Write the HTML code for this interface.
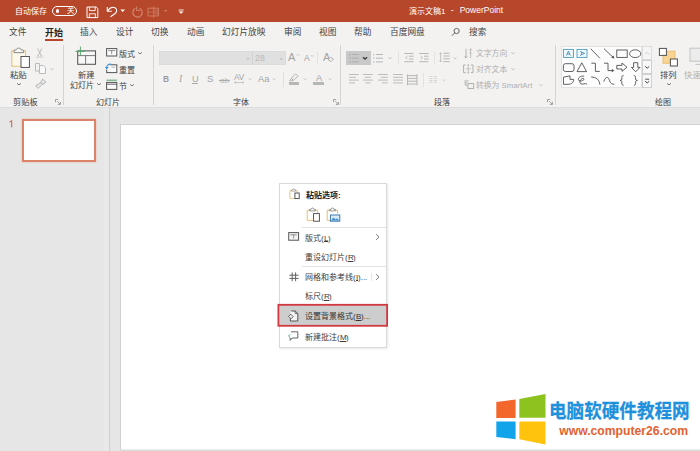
<!DOCTYPE html>
<html lang="zh-CN"><head><meta charset="utf-8"><title>PowerPoint</title><style>
html,body{margin:0;padding:0}
body{width:700px;height:451px;overflow:hidden;position:relative;background:#e6e6e6;font-family:"Liberation Sans",sans-serif}
.b{position:absolute;box-sizing:border-box}
.t{position:absolute;overflow:visible;display:block}
.l{position:absolute;white-space:nowrap;display:block}
svg text{font-family:"Liberation Sans","Noto Sans CJK SC",sans-serif}
</style></head>
<body>
<div class="b" style="left:0px;top:0px;width:700px;height:22px;background:#b7472a;"></div>
<div class="b" style="left:0px;top:22px;width:700px;height:85px;background:#f3f2f1;"></div>
<div class="b" style="left:0px;top:107px;width:700px;height:344px;background:#e6e6e6;"></div>
<div class="b" style="left:0px;top:107px;width:700px;height:1px;background:#dddddd;"></div>
<div class="b" style="left:104px;top:108px;width:5px;height:343px;background:#e9e9e9;"></div>
<svg class="t" style="left:109px;top:108px;" width="2" height="343"><rect x="0.2" y="0" width="0.7" height="343" fill="#c6c6c6"/></svg>
<svg class="t" style="left:119px;top:123px;" width="581" height="328"><rect x="1.6" y="1.5" width="590" height="325.6" fill="#fff" stroke="#cacaca" stroke-width="0.8"/></svg>
<svg class="t" aria-label="自动保存" role="img" style="left:15.00px;top:6.20px" width="33.00" height="10.40"><text x="0" y="7.60" font-size="8" fill="#fff">自动保存</text></svg>
<div class="b" style="left:52px;top:5.5px;width:25px;height:10px;border:1px solid #fff;border-radius:6px"></div>
<div class="b" style="left:55.5px;top:9px;width:3.6px;height:3.6px;border-radius:50%;background:#fff"></div>
<svg class="t" aria-label="关" role="img" style="left:66.50px;top:6.47px" width="8.50" height="9.75"><text x="0" y="7.12" font-size="7.5" fill="#fff">关</text></svg>
<svg class="t" style="left:86px;top:5.5px;" width="13" height="13"><path d="M1 1H10.2L11.8 2.6V11.6H1Z" fill="none" stroke="#fff" stroke-width="1"/><path d="M3.6 1V4.6H9.2V1M3.4 11.6V7.8H9.4V11.6" fill="none" stroke="#fff" stroke-width="0.9"/></svg>
<svg class="t" style="left:106px;top:5.5px;" width="13" height="13"><path d="M1.3 0.9V5.3H5.8" fill="none" stroke="#fff" stroke-width="1.1"/><path d="M1.6 5C3.5 2 6.5 0.5 9 1.8C11.5 3.3 11 6.5 8.5 8L4.5 10.7" fill="none" stroke="#fff" stroke-width="1.1"/></svg>
<svg class="t" style="left:119.5px;top:8px;" width="6" height="6"><path d="M0.4 1.6L2.7 4L5 1.6Z" fill="#fff"/></svg>
<svg class="t" style="left:131px;top:5.5px;" width="13" height="13"><path d="M4.2 2.3A4.7 4.7 0 1 0 8.6 2.2" fill="none" stroke="#d38a74" stroke-width="1.1"/><path d="M5.6 0.4V4.4H9" fill="none" stroke="#d38a74" stroke-width="0.9"/></svg>
<svg class="t" style="left:147px;top:5.5px;" width="13" height="13"><path d="M1 2.2H11.4V10H1Z" fill="none" stroke="#cf846e" stroke-width="0.9"/><path d="M6.6 0.2V12.4M1 6.1H11.4M6.6 4.2H11.4M6.6 8H11.4" fill="none" stroke="#cf846e" stroke-width="0.7"/></svg>
<svg class="t" style="left:163px;top:8px;" width="6" height="6"><path d="M0.9 1.9L2.7 3.7L4.5 1.9Z" fill="#cf846e"/></svg>
<svg class="t" style="left:178px;top:8.5px;" width="7" height="6"><path d="M0.6 1H5.6" stroke="#fff" stroke-width="0.9"/><path d="M0.6 2.6L3.1 4.8L5.6 2.6Z" fill="#fff"/></svg>
<svg class="t" style="left:451px;top:26.5px;" width="10" height="10"><circle cx="5.6" cy="4" r="2.6" fill="none" stroke="#555" stroke-width="0.9"/><path d="M3.8 5.8L0.8 8.8" stroke="#555" stroke-width="0.9"/></svg>
<svg class="t" aria-label="演示文稿1" role="img" style="left:408.50px;top:5.90px" width="37.56" height="10.40"><text x="0" y="7.60" font-size="8" fill="#fff">演示文稿1</text></svg>
<span class="l" style="left:450.8px;top:5.155px;font-size:9px;line-height:10.35px;color:#fff;font-weight:normal;">-</span>
<span class="l" style="left:459.7px;top:5.7075px;font-size:8.5px;line-height:9.775px;color:#fff;font-weight:normal;">PowerPoint</span>
<svg class="t" aria-label="文件" role="img" style="left:9.00px;top:26.84px" width="18.40" height="11.31"><text x="0" y="8.26" font-size="8.7" fill="#444">文件</text></svg>
<svg class="t" aria-label="插入" role="img" style="left:80.00px;top:26.84px" width="18.40" height="11.31"><text x="0" y="8.26" font-size="8.7" fill="#444">插入</text></svg>
<svg class="t" aria-label="设计" role="img" style="left:116.00px;top:26.84px" width="18.40" height="11.31"><text x="0" y="8.26" font-size="8.7" fill="#444">设计</text></svg>
<svg class="t" aria-label="切换" role="img" style="left:151.00px;top:26.84px" width="18.40" height="11.31"><text x="0" y="8.26" font-size="8.7" fill="#444">切换</text></svg>
<svg class="t" aria-label="动画" role="img" style="left:186.50px;top:26.84px" width="18.40" height="11.31"><text x="0" y="8.26" font-size="8.7" fill="#444">动画</text></svg>
<svg class="t" aria-label="幻灯片放映" role="img" style="left:222.00px;top:26.84px" width="44.50" height="11.31"><text x="0" y="8.26" font-size="8.7" fill="#444">幻灯片放映</text></svg>
<svg class="t" aria-label="审阅" role="img" style="left:283.50px;top:26.84px" width="18.40" height="11.31"><text x="0" y="8.26" font-size="8.7" fill="#444">审阅</text></svg>
<svg class="t" aria-label="视图" role="img" style="left:318.50px;top:26.84px" width="18.40" height="11.31"><text x="0" y="8.26" font-size="8.7" fill="#444">视图</text></svg>
<svg class="t" aria-label="帮助" role="img" style="left:354.00px;top:26.84px" width="18.40" height="11.31"><text x="0" y="8.26" font-size="8.7" fill="#444">帮助</text></svg>
<svg class="t" aria-label="百度网盘" role="img" style="left:389.60px;top:26.84px" width="35.80" height="11.31"><text x="0" y="8.26" font-size="8.7" fill="#444">百度网盘</text></svg>
<svg class="t" aria-label="搜索" role="img" style="left:469.00px;top:26.84px" width="18.40" height="11.31"><text x="0" y="8.26" font-size="8.7" fill="#444">搜索</text></svg>
<svg class="t" aria-label="开始" role="img" style="left:45.00px;top:26.65px" width="19.00" height="11.70"><text x="0" y="8.55" font-size="9" font-weight="bold" fill="#222">开始</text></svg>
<div class="b" style="left:45px;top:39px;width:18px;height:2px;background:#b7472a;"></div>
<div class="b" style="left:63.4px;top:44.5px;width:1px;height:60px;background:#d4d4d4;"></div>
<div class="b" style="left:152.8px;top:44.5px;width:1px;height:60px;background:#d4d4d4;"></div>
<div class="b" style="left:340.3px;top:44.5px;width:1px;height:60px;background:#d4d4d4;"></div>
<div class="b" style="left:554.8px;top:44.5px;width:1px;height:60px;background:#d4d4d4;"></div>
<svg class="t" style="left:10px;top:46px;" width="22" height="24"><path d="M4.6 4.9H1.9V20.2H10.6M13 4.9H15.4V10" fill="none" stroke="#ecc478" stroke-width="1.3"/><path d="M2.6 5.6V19.5H10.6V10H14.7V5.6Z" fill="#fdf8ec"/><path d="M4 6.6V4.9C4 4.3 4.4 4 5 4H6.2C6.2 1.5 11.2 1.5 11.2 4H12.6C13.2 4 13.6 4.3 13.6 4.9V6.6Z" fill="#fafafa" stroke="#7a7a7a" stroke-width="0.9"/><rect x="11" y="10.5" width="8.4" height="10.9" fill="#fff" stroke="#4f4f4f" stroke-width="0.95"/></svg>
<svg class="t" aria-label="粘贴" role="img" style="left:10.00px;top:69.62px" width="17.80" height="10.92"><text x="0" y="7.98" font-size="8.4" fill="#404040">粘贴</text></svg>
<svg class="t" style="left:16.4px;top:81.3px;" width="6" height="6"><polyline points="1.1,2.4 3,3.9 4.9,2.4" fill="none" stroke="#666" stroke-width="0.9"/></svg>
<svg class="t" style="left:36px;top:47.6px;" width="9" height="11"><path d="M1.6 0.4L5.2 7.6M5.8 0.4L2.2 7.6" stroke="#b6b6b6" stroke-width="0.9" fill="none"/><circle cx="1.9" cy="8.6" r="1.1" fill="none" stroke="#bcbcbc" stroke-width="0.7"/><circle cx="5.5" cy="8.6" r="1.1" fill="none" stroke="#bcbcbc" stroke-width="0.7"/></svg>
<svg class="t" style="left:35px;top:62.5px;" width="12" height="11"><path d="M0.5 0.5H4.5V8H0.5Z" fill="#f3f3f3" stroke="#b4b4b4" stroke-width="0.9"/><path d="M4.5 2.5H8.5L10.5 4.5V10.5H4.5Z" fill="#f8f8f8" stroke="#b4b4b4" stroke-width="0.9"/></svg>
<svg class="t" style="left:49px;top:65.7px;" width="6" height="6"><polyline points="1.4,2.45 3,3.85 4.6,2.45" fill="none" stroke="#bcbcbc" stroke-width="0.85"/></svg>
<svg class="t" style="left:35px;top:78px;" width="12" height="11"><path d="M7.8 1L11 4.2L7.6 6.4L5.6 4.4ZM5.8 4.6L7.4 6.2L3.2 10.4L0.6 7.8Z" fill="#e6e6e6" stroke="#b0b0b0" stroke-width="0.9" stroke-linejoin="round"/></svg>
<svg class="t" aria-label="剪贴板" role="img" style="left:13.20px;top:96.51px" width="25.60" height="10.66"><text x="0" y="7.79" font-size="8.2" fill="#404040">剪贴板</text></svg>
<svg class="t" style="left:55.3px;top:98.8px;" width="6" height="6"><path d="M0.5 3.2V0.5H3.2M2.2 2.2L5.2 5.2M5.4 2.8V5.4H2.8" fill="none" stroke="#8a8a8a" stroke-width="0.8"/></svg>
<svg class="t" style="left:74px;top:46px;" width="24" height="20"><rect x="3.7" y="4.9" width="17.8" height="13.4" fill="#f7f7f7" stroke="#5c5c5c" stroke-width="1.1"/><path d="M3.9 9.6H21.5M11.6 9.6V18.3" stroke="#6b6b6b" stroke-width="0.9" fill="none"/><path d="M6.4 0.6V9.6M1.6 5.4H11" stroke="#4fa868" stroke-width="0.95" fill="none"/></svg>
<svg class="t" aria-label="新建" role="img" style="left:78.20px;top:69.81px" width="17.40" height="10.66"><text x="0" y="7.79" font-size="8.2" fill="#404040">新建</text></svg>
<svg class="t" aria-label="幻灯片" role="img" style="left:70.40px;top:80.20px" width="25.00" height="10.40"><text x="0" y="7.60" font-size="8" fill="#404040">幻灯片</text></svg>
<svg class="t" style="left:96.1px;top:81.3px;" width="6" height="6"><polyline points="1.1,2.4 3,3.9 4.9,2.4" fill="none" stroke="#666" stroke-width="0.9"/></svg>
<svg class="t" style="left:106px;top:48.1px;" width="12" height="9"><rect x="0.6" y="0.6" width="10.2" height="7.4" fill="#fafafa" stroke="#555" stroke-width="1"/><path d="M2.3 2.6H9.1M5.7 2.6V6.2" stroke="#777" stroke-width="0.8" fill="none"/></svg>
<svg class="t" aria-label="版式" role="img" style="left:119.30px;top:48.80px" width="17.00" height="10.40"><text x="0" y="7.60" font-size="8" fill="#404040">版式</text></svg>
<svg class="t" style="left:137px;top:50.2px;" width="6" height="6"><polyline points="1.1,2.4 3,3.9 4.9,2.4" fill="none" stroke="#666" stroke-width="0.9"/></svg>
<svg class="t" style="left:105px;top:62.5px;" width="13" height="11"><rect x="1.7" y="1.8" width="10.1" height="7.8" fill="#fafafa" stroke="#555" stroke-width="1"/><path d="M6.4 4.2H10" stroke="#999" stroke-width="0.7"/><path d="M0 0H5.6V2.6H4.4V6.4H0Z" fill="#f3f2f1"/><path d="M6.2 1.3C3.6 0.7 1.6 2.4 1.7 5" fill="none" stroke="#3a8fd0" stroke-width="1.1"/><path d="M-0.1 3.9L1.7 6.6L3.6 4.1Z" fill="#3a8fd0"/></svg>
<svg class="t" aria-label="重置" role="img" style="left:119.30px;top:64.70px" width="17.00" height="10.40"><text x="0" y="7.60" font-size="8" fill="#404040">重置</text></svg>
<svg class="t" style="left:106px;top:79px;" width="12" height="12"><path d="M0.6 1.2H10.8" stroke="#5aa76b" stroke-width="1.1"/><rect x="0.6" y="3.4" width="10.2" height="7" fill="#fafafa" stroke="#555" stroke-width="1"/><path d="M0.6 5.2H10.8" stroke="#555" stroke-width="0.9"/></svg>
<svg class="t" aria-label="节" role="img" style="left:119.40px;top:80.50px" width="9.00" height="10.40"><text x="0" y="7.60" font-size="8" fill="#404040">节</text></svg>
<svg class="t" style="left:129.2px;top:82px;" width="6" height="6"><polyline points="1.1,2.4 3,3.9 4.9,2.4" fill="none" stroke="#666" stroke-width="0.9"/></svg>
<svg class="t" aria-label="幻灯片" role="img" style="left:95.50px;top:96.70px" width="25.00" height="10.40"><text x="0" y="7.60" font-size="8" fill="#404040">幻灯片</text></svg>
<div class="b" style="left:158.5px;top:50.7px;width:127px;height:14.3px;background:#e0e0e0;border:1px solid #dbdbdb;"></div>
<div class="b" style="left:251.6px;top:51.5px;width:1px;height:12.8px;background:#d2d2d2;"></div>
<svg class="t" style="left:245.1px;top:56px;" width="6" height="6"><path d="M1.3 2.2L3 4L4.7 2.2Z" fill="#bdbdbd"/></svg>
<svg class="t" aria-label="28" role="img" style="left:254.60px;top:53.34px" width="10.77" height="11.44"><text x="0" y="8.36" font-size="8.8" fill="#bababa">28</text></svg>
<svg class="t" style="left:277.7px;top:56px;" width="6" height="6"><path d="M1.3 2.2L3 4L4.7 2.2Z" fill="#bdbdbd"/></svg>
<svg class="t" aria-label="A" role="img" style="left:288.30px;top:50.95px" width="7.69" height="14.30"><text x="0" y="10.45" font-size="11" fill="#a2a2a2">A</text></svg>
<svg class="t" style="left:295.6px;top:52.6px;" width="5" height="4"><polyline points="0.8,2.5 2.1,1.1 3.4,2.5" fill="none" stroke="#b8b8b8" stroke-width="0.7"/></svg>
<svg class="t" aria-label="A" role="img" style="left:304.20px;top:53.33px" width="6.17" height="11.05"><text x="0" y="8.07" font-size="8.5" fill="#a2a2a2">A</text></svg>
<svg class="t" style="left:309.6px;top:53.6px;" width="5" height="4"><polyline points="0.8,1.1 2.1,2.5 3.4,1.1" fill="none" stroke="#b8b8b8" stroke-width="0.7"/></svg>
<div class="b" style="left:317px;top:52px;width:1px;height:11.5px;background:#e2e2e2;"></div>
<svg class="t" aria-label="A" role="img" style="left:322.70px;top:50.95px" width="7.69" height="14.30"><text x="0" y="10.45" font-size="11" fill="#a2a2a2">A</text></svg>
<svg class="t" style="left:327px;top:56.4px;" width="8" height="7"><path d="M3.6 1.2L6.4 3L4 5.6L1.2 3.8Z" fill="#f3f2f1" stroke="#a4a4a4" stroke-width="0.8"/></svg>
<svg class="t" aria-label="B" role="img" style="left:163.10px;top:72.67px" width="6.69" height="12.35"><text x="0" y="9.03" font-size="9.5" font-weight="bold" fill="#9c9c9c" transform="translate(0,0) scale(0.88,1)">B</text></svg>
<span class="l" style="left:179px;top:72.931px;font-size:9.8px;line-height:11.27px;color:#a4a4a4;font-weight:normal;font-style:italic;font-family:'Liberation Serif',serif;">I</span>
<svg class="t" aria-label="U" role="img" style="left:192.30px;top:72.66px" width="7.63" height="11.96"><text x="0" y="8.74" font-size="9.2" fill="#a4a4a4">U</text></svg>
<div class="b" style="left:192.4px;top:82.8px;width:5.6px;height:0.8px;background:#ababab;"></div>
<svg class="t" aria-label="S" role="img" style="left:207.00px;top:72.67px" width="6.78" height="12.35"><text x="0" y="9.03" font-size="9.5" fill="#a4a4a4">S</text></svg>
<svg class="t" aria-label="ab" role="img" style="left:220.00px;top:74.60px" width="10.45" height="10.40"><text x="0" y="7.60" font-size="8" fill="#b8b8b8">ab</text></svg>
<div class="b" style="left:219.2px;top:79.6px;width:10.8px;height:0.8px;background:#ababab;"></div>
<svg class="t" aria-label="AV" role="img" style="left:234.20px;top:72.11px" width="9.70" height="10.66"><text x="0" y="7.79" font-size="8.2" fill="#a4a4a4">AV</text></svg>
<svg class="t" style="left:234px;top:81.2px;" width="11" height="3"><path d="M0.5 1.5H9.8M1.8 0.4L0.5 1.5L1.8 2.6M8.5 0.4L9.8 1.5L8.5 2.6" fill="none" stroke="#b0b0b0" stroke-width="0.6"/></svg>
<svg class="t" style="left:246.6px;top:76.3px;" width="6" height="6"><polyline points="1.5,2.5 3,3.8 4.5,2.5" fill="none" stroke="#c2c2c2" stroke-width="0.8"/></svg>
<svg class="t" aria-label="Aa" role="img" style="left:258.20px;top:73.37px" width="11.89" height="12.09"><text x="0" y="8.84" font-size="9.3" fill="#a4a4a4">Aa</text></svg>
<svg class="t" style="left:271.4px;top:76.3px;" width="6" height="6"><polyline points="1.5,2.5 3,3.8 4.5,2.5" fill="none" stroke="#c2c2c2" stroke-width="0.8"/></svg>
<div class="b" style="left:283px;top:72.3px;width:1px;height:14.5px;background:#e0e0e0;"></div>
<svg class="t" style="left:288px;top:73px;" width="12" height="9"><path d="M7.5 0.8L10 3.3L5.3 7.2L3.4 5.3ZM3.4 5.3L5.3 7.2L3.6 7.8H1.6Z" fill="#f3f3f3" stroke="#a6a6a6" stroke-width="0.8" stroke-linejoin="round"/></svg>
<div class="b" style="left:288.5px;top:82.1px;width:10.6px;height:2.6px;background:#b6b6b6;"></div>
<svg class="t" style="left:301.8px;top:76.3px;" width="6" height="6"><polyline points="1.5,2.5 3,3.8 4.5,2.5" fill="none" stroke="#c2c2c2" stroke-width="0.8"/></svg>
<svg class="t" aria-label="A" role="img" style="left:315.64px;top:72.27px" width="6.72" height="12.22"><text x="0" y="8.93" font-size="9.4" fill="#a4a4a4">A</text></svg>
<div class="b" style="left:313.2px;top:82.1px;width:10.6px;height:2.6px;background:#b6b6b6;"></div>
<svg class="t" style="left:327.1px;top:76.3px;" width="6" height="6"><polyline points="1.5,2.5 3,3.8 4.5,2.5" fill="none" stroke="#c2c2c2" stroke-width="0.8"/></svg>
<svg class="t" aria-label="字体" role="img" style="left:233.00px;top:96.70px" width="17.00" height="10.40"><text x="0" y="7.60" font-size="8" fill="#404040">字体</text></svg>
<svg class="t" style="left:332.6px;top:98.8px;" width="6" height="6"><path d="M0.5 3.2V0.5H3.2M2.2 2.2L5.2 5.2M5.4 2.8V5.4H2.8" fill="none" stroke="#8a8a8a" stroke-width="0.8"/></svg>
<div class="b" style="left:346px;top:50.7px;width:24.8px;height:14.4px;background:#c9c9c9;"></div>
<svg class="t" style="left:349px;top:52.5px;" width="12" height="11"><rect x="0.2" y="0.8" width="1.4" height="1.4" fill="#aaa"/><path d="M3 1.5H9.6" stroke="#aaa" stroke-width="0.9"/><rect x="0.2" y="4.5" width="1.4" height="1.4" fill="#aaa"/><path d="M3 5.2H9.6" stroke="#aaa" stroke-width="0.9"/><rect x="0.2" y="8.2" width="1.4" height="1.4" fill="#aaa"/><path d="M3 8.9H9.6" stroke="#aaa" stroke-width="0.9"/></svg>
<svg class="t" style="left:362.2px;top:55.2px;" width="6" height="6"><polyline points="0.9,2.2 3,4.1 5.1,2.2" fill="none" stroke="#3a3a3a" stroke-width="1.3"/></svg>
<svg class="t" style="left:373px;top:52.5px;" width="12" height="11"><rect x="0.3" y="0.7" width="1" height="1.6" fill="#b8b8b8"/><path d="M3 1.5H10" stroke="#b0b0b0" stroke-width="0.9"/><rect x="0.3" y="4.4" width="1" height="1.6" fill="#b8b8b8"/><path d="M3 5.2H10" stroke="#b0b0b0" stroke-width="0.9"/><rect x="0.3" y="8.1" width="1" height="1.6" fill="#b8b8b8"/><path d="M3 8.9H10" stroke="#b0b0b0" stroke-width="0.9"/></svg>
<svg class="t" style="left:387px;top:55.2px;" width="6" height="6"><polyline points="1.4,2.45 3,3.85 4.6,2.45" fill="none" stroke="#bcbcbc" stroke-width="0.85"/></svg>
<div class="b" style="left:398.4px;top:51.5px;width:1px;height:12px;background:#e2e2e2;"></div>
<svg class="t" style="left:404.2px;top:53px;" width="11" height="10"><path d="M0.3 0.5H9.6M0.3 8.7H9.6M5 3.2H9.6M5 6H9.6" stroke="#b0b0b0" stroke-width="0.9"/><path d="M3.4 3.2L1.6 4.6L3.4 6" fill="none" stroke="#b0b0b0" stroke-width="0.8"/></svg>
<svg class="t" style="left:419.2px;top:53px;" width="11" height="10"><path d="M0.3 0.5H9.6M0.3 8.7H9.6M5 3.2H9.6M5 6H9.6" stroke="#b0b0b0" stroke-width="0.9"/><path d="M1.6 3.2L3.4 4.6L1.6 6" fill="none" stroke="#b0b0b0" stroke-width="0.8"/></svg>
<div class="b" style="left:434.4px;top:51.5px;width:1px;height:12px;background:#e2e2e2;"></div>
<svg class="t" style="left:439px;top:52.3px;" width="12" height="11"><path d="M4.4 1.2H10.6M4.4 4H10.6M4.4 6.8H10.6M4.4 9.6H10.6" stroke="#b0b0b0" stroke-width="0.9"/><path d="M1.6 0.8V10M0.3 2.2L1.6 0.8L2.9 2.2M0.3 8.6L1.6 10L2.9 8.6" fill="none" stroke="#b0b0b0" stroke-width="0.7"/></svg>
<svg class="t" style="left:452px;top:55.2px;" width="6" height="6"><polyline points="1.4,2.45 3,3.85 4.6,2.45" fill="none" stroke="#bcbcbc" stroke-width="0.85"/></svg>
<svg class="t" style="left:348.8px;top:74.4px;" width="14" height="14"><path d="M0 0.5H9.8" stroke="#b6b6b6" stroke-width="0.9"/><path d="M0 3.3H7" stroke="#b6b6b6" stroke-width="0.9"/><path d="M0 6.1H9.8" stroke="#b6b6b6" stroke-width="0.9"/><path d="M0 8.9H6" stroke="#b6b6b6" stroke-width="0.9"/></svg>
<svg class="t" style="left:363.3px;top:74.4px;" width="14" height="14"><path d="M0 0.5H9.8" stroke="#b6b6b6" stroke-width="0.9"/><path d="M1.9 3.3H7.9" stroke="#b6b6b6" stroke-width="0.9"/><path d="M0 6.1H9.8" stroke="#b6b6b6" stroke-width="0.9"/><path d="M2.4 8.9H7.4" stroke="#b6b6b6" stroke-width="0.9"/></svg>
<svg class="t" style="left:378.2px;top:74.4px;" width="14" height="14"><path d="M0 0.5H9.8" stroke="#b6b6b6" stroke-width="0.9"/><path d="M2.8 3.3H9.8" stroke="#b6b6b6" stroke-width="0.9"/><path d="M0 6.1H9.8" stroke="#b6b6b6" stroke-width="0.9"/><path d="M3.8 8.9H9.8" stroke="#b6b6b6" stroke-width="0.9"/></svg>
<svg class="t" style="left:392.9px;top:74.4px;" width="14" height="14"><path d="M0 0.5H9.8" stroke="#b6b6b6" stroke-width="0.9"/><path d="M0 3.3H9.8" stroke="#b6b6b6" stroke-width="0.9"/><path d="M0 6.1H9.8" stroke="#b6b6b6" stroke-width="0.9"/><path d="M0 8.9H9.8" stroke="#b6b6b6" stroke-width="0.9"/></svg>
<svg class="t" style="left:407.2px;top:73.5px;" width="12" height="12"><path d="M0.5 0.3V11.2M10 0.3V11.2" stroke="#aaa" stroke-width="0.8"/><path d="M0.5 1.6H10M0.5 4.4H10M0.5 7.2H10M0.5 10H10" stroke="#b0b0b0" stroke-width="0.9"/></svg>
<div class="b" style="left:422.6px;top:73px;width:1px;height:14px;background:#e2e2e2;"></div>
<svg class="t" style="left:429px;top:75.8px;" width="9" height="7"><path d="M0.2 0.5H3.4M0.2 2.5H3.4M0.2 4.5H3.4M0.2 6.3H3.4M4.8 0.5H8M4.8 2.5H8M4.8 4.5H8M4.8 6.3H8" stroke="#cfcfcf" stroke-width="0.8"/></svg>
<svg class="t" style="left:440.5px;top:76.5px;" width="6" height="6"><polyline points="1.5,2.5 3,3.8 4.5,2.5" fill="none" stroke="#cccccc" stroke-width="0.8"/></svg>
<svg class="t" style="left:464px;top:48px;" width="10" height="11"><path d="M2 0.8V10M0.6 8.4L2 10L3.4 8.4" fill="none" stroke="#a8a8a8" stroke-width="0.9"/><path d="M6.6 10V0.8M5.2 2.4L6.6 0.8L8 2.4" fill="none" stroke="#b8b8b8" stroke-width="0.9"/><path d="M5 5H8.4" stroke="#b8b8b8" stroke-width="0.6"/></svg>
<svg class="t" aria-label="文字方向" role="img" style="left:476.40px;top:49.09px" width="32.20" height="10.14"><text x="0" y="7.41" font-size="7.8" fill="#b0b0b0">文字方向</text></svg>
<svg class="t" style="left:510.2px;top:50.4px;" width="6" height="6"><polyline points="1.4,2.45 3,3.85 4.6,2.45" fill="none" stroke="#bcbcbc" stroke-width="0.85"/></svg>
<svg class="t" style="left:463.2px;top:63.8px;" width="11" height="10"><path d="M2.6 1H0.6V8.6H2.6M8 1H10V8.6H8" fill="none" stroke="#a8a8a8" stroke-width="0.9"/><path d="M5.3 0.3V9.3M2.8 4.8H7.8M4.3 1.6L5.3 0.4L6.3 1.6M4.3 8L5.3 9.2L6.3 8" fill="none" stroke="#b4b4b4" stroke-width="0.7"/></svg>
<svg class="t" aria-label="对齐文本" role="img" style="left:476.40px;top:65.29px" width="32.20" height="10.14"><text x="0" y="7.41" font-size="7.8" fill="#b0b0b0">对齐文本</text></svg>
<svg class="t" style="left:510.2px;top:66.3px;" width="6" height="6"><polyline points="1.4,2.45 3,3.85 4.6,2.45" fill="none" stroke="#bcbcbc" stroke-width="0.85"/></svg>
<svg class="t" style="left:464px;top:80px;" width="11" height="10"><path d="M0.4 1H4.6M0.4 2.8H3" stroke="#a8a8a8" stroke-width="0.9"/><path d="M1.4 2.8V5.4H3.4" fill="none" stroke="#a8a8a8" stroke-width="0.8"/><rect x="3.9" y="3.6" width="5.8" height="4.8" fill="#f3f3f3" stroke="#a6a6a6" stroke-width="0.9"/></svg>
<svg class="t" aria-label="转换为 SmartArt" role="img" style="left:476.40px;top:80.79px" width="59.09" height="10.14"><text x="0" y="7.41" font-size="7.8" fill="#b0b0b0">转换为 SmartArt</text></svg>
<svg class="t" style="left:538.4px;top:82px;" width="6" height="6"><polyline points="1.4,2.45 3,3.85 4.6,2.45" fill="none" stroke="#bcbcbc" stroke-width="0.85"/></svg>
<svg class="t" aria-label="段落" role="img" style="left:433.80px;top:96.70px" width="17.00" height="10.40"><text x="0" y="7.60" font-size="8" fill="#404040">段落</text></svg>
<svg class="t" style="left:546.6px;top:99.2px;" width="6" height="6"><path d="M0.5 3.2V0.5H3.2M2.2 2.2L5.2 5.2M5.4 2.8V5.4H2.8" fill="none" stroke="#8a8a8a" stroke-width="0.8"/></svg>
<div class="b" style="left:561px;top:46.4px;width:81px;height:41.2px;background:#fdfdfd;border:1px solid #e2e2e2;"></div>
<div class="b" style="left:642px;top:46.4px;width:10.4px;height:13.8px;background:#f5f5f5;border:1px solid #dcdcdc;"></div>
<div class="b" style="left:642px;top:60.2px;width:10.4px;height:13.8px;background:#f8f8f8;border:1px solid #cfcfcf;"></div>
<div class="b" style="left:642px;top:74px;width:10.4px;height:13.6px;background:#f8f8f8;border:1px solid #cfcfcf;"></div>
<svg class="t" style="left:644px;top:51px;" width="7" height="5"><polyline points="1.2,3.2 3.2,1.4 5.2,3.2" fill="none" stroke="#c8c8c8" stroke-width="0.8"/></svg>
<svg class="t" style="left:644px;top:65px;" width="7" height="5"><polyline points="1.2,1.4 3.2,3.2 5.2,1.4" fill="none" stroke="#444" stroke-width="1"/></svg>
<svg class="t" style="left:644px;top:77.5px;" width="7" height="7"><path d="M1.2 1.2H5.2" stroke="#444" stroke-width="0.9"/><polyline points="1.2,3.2 3.2,5 5.2,3.2" fill="none" stroke="#444" stroke-width="1"/></svg>
<svg class="t" style="left:561px;top:46.4px;" width="81" height="42"><rect x="2.4" y="3.4" width="10" height="8" fill="#f2f9fc" stroke="#4a9abf" stroke-width="0.9"/><path d="M5.4 9.6L7.4 5L9.4 9.6M6.2 8H8.6" fill="none" stroke="#3b7fb0" stroke-width="0.8"/><rect x="16" y="3.4" width="10" height="8" fill="#f2f9fc" stroke="#4a9abf" stroke-width="0.9"/><path d="M19 5.4L23.6 7.4L19 9.4M20.6 6.2V8.6" fill="none" stroke="#3b7fb0" stroke-width="0.8"/><path d="M29.7 2.7L38.9 12.3" fill="none" stroke="#4f4f4f" stroke-width="0.9"/><path d="M43 2.7L52.6 11.8" fill="none" stroke="#4f4f4f" stroke-width="0.9"/><path d="M53.3 12.4L50.2 11.7L52.5 9.4Z" fill="#4f4f4f"/><rect x="55.8" y="4" width="10.4" height="7.4" fill="none" stroke="#4f4f4f" stroke-width="0.9"/><ellipse cx="74.2" cy="7.7" rx="5.6" ry="3.9" fill="none" stroke="#4f4f4f" stroke-width="0.9"/><rect x="2.4" y="17.7" width="10.6" height="7.8" rx="2" fill="none" stroke="#4f4f4f" stroke-width="0.9"/><path d="M16 25.6L20.8 16.8L25.6 25.6Z" fill="none" stroke="#4f4f4f" stroke-width="0.9"/><path d="M30.4 17.2H34.4V25.4H38.8" fill="none" stroke="#4f4f4f" stroke-width="0.9"/><path d="M43 17.2H47V24.6H52" fill="none" stroke="#4f4f4f" stroke-width="0.9"/><path d="M53.4 24.6L50.8 23L50.8 26.2Z" fill="#4f4f4f"/><path d="M55.8 19.4H61V17L66 21.2L61 25.4V23H55.8Z" fill="none" stroke="#4f4f4f" stroke-width="0.9"/><path d="M72.6 16.7H76.8V21.4H79L74.7 25.8L70.4 21.4H72.6Z" fill="none" stroke="#4f4f4f" stroke-width="0.9"/><path d="M2.5 31.1L9 29.9V33.4H12.6C12.8 36.4 10.6 38.3 7 38.3H2.5Z" fill="none" stroke="#4f4f4f" stroke-width="0.9"/><path d="M23.2 30.2C19.5 29.6 16.4 32.2 17.6 34.2C19 36.4 24.6 33.8 22.6 32.6C20.4 31.4 17.4 36.4 19.8 37.8C22 39 24 36.6 26 38.2" fill="none" stroke="#4f4f4f" stroke-width="0.9"/><path d="M30.2 31C35.2 31 38.6 34 38.8 38.6" fill="none" stroke="#4f4f4f" stroke-width="0.9"/><path d="M42.8 35.6C45 29 47.6 31.4 48.4 34.2C49.2 37.4 51.4 38.6 53.4 38.2" fill="none" stroke="#4f4f4f" stroke-width="0.9"/><path d="M62.6 29.6C61 29.6 60.8 30.4 60.8 31.4V33C60.8 34 60.2 34.4 59 34.4C60.2 34.4 60.8 34.8 60.8 35.8V37.4C60.8 38.4 61 39.2 62.6 39.2" fill="none" stroke="#4f4f4f" stroke-width="0.9"/><path d="M72.8 29.6C74.4 29.6 74.6 30.4 74.6 31.4V33C74.6 34 75.2 34.4 76.4 34.4C75.2 34.4 74.6 34.8 74.6 35.8V37.4C74.6 38.4 74.4 39.2 72.8 39.2" fill="none" stroke="#4f4f4f" stroke-width="0.9"/></svg>
<svg class="t" style="left:658px;top:47px;" width="22" height="21"><rect x="5" y="4.2" width="12" height="12" fill="#f8d494" stroke="#ecbb66" stroke-width="0.9"/><rect x="1.4" y="1.4" width="7" height="7" fill="#fff" stroke="#505050" stroke-width="1"/><rect x="12.4" y="12" width="7" height="7" fill="#fff" stroke="#505050" stroke-width="1"/></svg>
<svg class="t" aria-label="排列" role="img" style="left:660.30px;top:70.21px" width="17.40" height="10.66"><text x="0" y="7.79" font-size="8.2" fill="#404040">排列</text></svg>
<svg class="t" style="left:666px;top:81px;" width="6" height="6"><polyline points="1.1,2.4 3,3.9 4.9,2.4" fill="none" stroke="#666" stroke-width="0.9"/></svg>
<svg class="t" style="left:689px;top:47px;" width="12" height="20"><rect x="1" y="1.2" width="14" height="13" fill="#ececec" stroke="#c4c4c4" stroke-width="1"/><path d="M6.5 17.4H12" stroke="#c4c4c4" stroke-width="1"/></svg>
<svg class="t" aria-label="快速" role="img" style="left:684.00px;top:70.21px" width="17.40" height="10.66"><text x="0" y="7.79" font-size="8.2" fill="#b0b0b0">快速</text></svg>
<svg class="t" aria-label="绘图" role="img" style="left:655.00px;top:96.70px" width="17.00" height="10.40"><text x="0" y="7.60" font-size="8" fill="#404040">绘图</text></svg>
<svg class="t" style="left:9px;top:119.6px;overflow:visible" width="5" height="8"><title>1</title><path d="M0.5 2.1L2.7 0.6V7.4" fill="none" stroke="#cf5a40" stroke-width="1" stroke-linejoin="miter"/></svg>
<div class="b" style="left:22px;top:118.6px;width:74.2px;height:43.6px;background:#fff;border:2px solid #dd8468;box-shadow:0 0 1.5px rgba(221,132,104,0.6);"></div>
<div class="b" style="left:279.2px;top:183.4px;width:107.4px;height:164.2px;background:#fff;border:1px solid #dadada;box-shadow:0.5px 1px 2.5px rgba(0,0,0,0.09);"></div>
<svg class="t" style="left:288.8px;top:187.9px;" width="11.5" height="11.5"><path d="M2.8 2.6H0.9V10.4H5.4M6.8 2.6H8.2V4.6" fill="none" stroke="#e6c07e" stroke-width="0.9"/><path d="M2.5 3.1V2H3.4C3.4 0.5 5.8 0.5 5.8 2H6.9V3.1Z" fill="#fff" stroke="#888" stroke-width="0.7"/><rect x="5.9" y="5" width="4.3" height="5.6" fill="#fff" stroke="#444" stroke-width="0.9"/></svg>
<svg class="t" aria-label="粘贴选项:" role="img" style="left:306.00px;top:189.90px" width="35.60" height="10.40"><text x="0" y="7.60" font-size="8" font-weight="bold" fill="#222">粘贴选项:</text></svg>
<svg class="t" style="left:306px;top:207.3px;" width="14.5" height="15" viewBox="0 0 14.5 15"><path d="M4 3.2H1.2V13.4H7.4M9.4 3.2H11.6V6.4" fill="none" stroke="#e8bd74" stroke-width="1"/><path d="M3.6 3.9V2.4H5C5 0.6 8 0.6 8 2.4H9.4V3.9Z" fill="#fff" stroke="#777" stroke-width="0.8"/><rect x="7.6" y="6.6" width="5.8" height="7.6" fill="#fff" stroke="#444" stroke-width="0.9"/></svg>
<svg class="t" style="left:326.3px;top:207.3px;" width="14.5" height="15" viewBox="0 0 14.5 15"><path d="M4 3.2H1.2V13.4H7.4M9.4 3.2H11.6V6.4" fill="none" stroke="#e8bd74" stroke-width="1"/><path d="M3.6 3.9V2.4H5C5 0.6 8 0.6 8 2.4H9.4V3.9Z" fill="#fff" stroke="#777" stroke-width="0.8"/><rect x="4.4" y="8" width="9.4" height="6.2" fill="#dbeaf7" stroke="#2f6fa8" stroke-width="0.9"/><path d="M4.9 13.6L7.6 10.6L9.6 12.4L11 11.2L13.4 13.6Z" fill="#3f8fd0"/></svg>
<div class="b" style="left:302px;top:227.4px;width:84px;height:1px;background:#e3e3e3;"></div>
<svg class="t" style="left:288px;top:232.2px;" width="12" height="9"><rect x="0.7" y="0.6" width="9.9" height="7.6" fill="#f4f4f4" stroke="#555" stroke-width="1"/><path d="M2.4 2.8H8.9M5.6 2.8V6.4" stroke="#777" stroke-width="0.8" fill="none"/></svg>
<svg class="t" aria-label="版式(" role="img" style="left:304.90px;top:232.60px" width="19.85" height="10.40"><text x="0" y="7.60" font-size="8" fill="#3c3c3c">版式(</text></svg>
<svg class="t" aria-label="L" role="img" style="left:323.75px;top:232.60px" width="5.46" height="10.40"><text x="0" y="7.60" font-size="8" fill="#3c3c3c">L</text></svg>
<div class="b" style="left:323.948px;top:241.1px;width:4.064px;height:0.7px;background:#3c3c3c;"></div>
<svg class="t" aria-label=")" role="img" style="left:328.21px;top:232.60px" width="3.85" height="10.40"><text x="0" y="7.60" font-size="8" fill="#3c3c3c">)</text></svg>
<svg class="t" style="left:375px;top:232.5px;" width="6" height="8"><polyline points="1,1 4,4 1,7" fill="none" stroke="#707070" stroke-width="0.85"/></svg>
<svg class="t" aria-label="重设幻灯片(" role="img" style="left:304.90px;top:252.10px" width="43.85" height="10.40"><text x="0" y="7.60" font-size="8" fill="#3c3c3c">重设幻灯片(</text></svg>
<svg class="t" aria-label="R" role="img" style="left:347.75px;top:252.10px" width="6.25" height="10.40"><text x="0" y="7.60" font-size="8" fill="#3c3c3c">R</text></svg>
<div class="b" style="left:347.948px;top:260.6px;width:4.848px;height:0.7px;background:#3c3c3c;"></div>
<svg class="t" aria-label=")" role="img" style="left:353.00px;top:252.10px" width="3.85" height="10.40"><text x="0" y="7.60" font-size="8" fill="#3c3c3c">)</text></svg>
<div class="b" style="left:301.5px;top:266px;width:84.5px;height:1px;background:#e3e3e3;"></div>
<svg class="t" style="left:288.6px;top:271.8px;" width="10" height="10"><path d="M3.2 0.4V9.2M6.6 0.4V9.2M0.3 3.2H9.6M0.3 6.4H9.6" stroke="#555" stroke-width="0.9" fill="none"/></svg>
<svg class="t" aria-label="网格和参考线(" role="img" style="left:304.90px;top:271.90px" width="51.85" height="10.40"><text x="0" y="7.60" font-size="8" fill="#3c3c3c">网格和参考线(</text></svg>
<svg class="t" aria-label="I" role="img" style="left:355.75px;top:271.90px" width="3.47" height="10.40"><text x="0" y="7.60" font-size="8" fill="#3c3c3c">I</text></svg>
<div class="b" style="left:355.948px;top:280.4px;width:2.072px;height:0.7px;background:#3c3c3c;"></div>
<svg class="t" aria-label=")..." role="img" style="left:358.22px;top:271.90px" width="11.00" height="10.40"><text x="0" y="7.60" font-size="8" fill="#3c3c3c">)...</text></svg>
<div class="b" style="left:371.2px;top:272.5px;width:1px;height:8.5px;background:#e6e6e6;"></div>
<svg class="t" style="left:375px;top:272.5px;" width="6" height="8"><polyline points="1,1 4,4 1,7" fill="none" stroke="#707070" stroke-width="0.85"/></svg>
<svg class="t" aria-label="标尺(" role="img" style="left:304.90px;top:291.10px" width="19.85" height="10.40"><text x="0" y="7.60" font-size="8" fill="#3c3c3c">标尺(</text></svg>
<svg class="t" aria-label="R" role="img" style="left:323.75px;top:291.10px" width="6.25" height="10.40"><text x="0" y="7.60" font-size="8" fill="#3c3c3c">R</text></svg>
<div class="b" style="left:323.948px;top:299.6px;width:4.848px;height:0.7px;background:#3c3c3c;"></div>
<svg class="t" aria-label=")" role="img" style="left:329.00px;top:291.10px" width="3.85" height="10.40"><text x="0" y="7.60" font-size="8" fill="#3c3c3c">)</text></svg>
<svg class="t" style="left:276px;top:302px;" width="114" height="27"><rect x="2.4" y="2.8" width="108.7" height="21" fill="#cdcdcd" stroke="#d2383f" stroke-width="1.8"/></svg>
<svg class="t" style="left:287.8px;top:309.9px;" width="11" height="12"><path d="M3 1H7.2L9.8 3.6V11H2.4V1Z" fill="#f4f4f4" stroke="none"/><path d="M3.2 1H7.2L9.8 3.6V11H2.4V8.4" fill="none" stroke="#444" stroke-width="0.9"/><path d="M7.2 1V3.6H9.8" fill="none" stroke="#444" stroke-width="0.7"/><path d="M2.8 4.2L5.2 6.6L3 8.8L0.6 6.4Z" fill="#ececec" stroke="#444" stroke-width="0.8"/></svg>
<svg class="t" aria-label="设置背景格式(" role="img" style="left:304.90px;top:311.10px" width="51.85" height="10.40"><text x="0" y="7.60" font-size="8" fill="#333">设置背景格式(</text></svg>
<svg class="t" aria-label="B" role="img" style="left:355.75px;top:311.10px" width="6.34" height="10.40"><text x="0" y="7.60" font-size="8" fill="#333">B</text></svg>
<div class="b" style="left:355.948px;top:319.6px;width:4.936px;height:0.7px;background:#333;"></div>
<svg class="t" aria-label=")..." role="img" style="left:361.08px;top:311.10px" width="11.00" height="10.40"><text x="0" y="7.60" font-size="8" fill="#333">)...</text></svg>
<svg class="t" style="left:288px;top:330.6px;" width="11" height="11"><path d="M3 0.8H9.8V7H4.2L2.2 9.4V7" fill="none" stroke="#555" stroke-width="0.9"/><path d="M2.2 7L0.6 4.6L2.4 3.4" fill="none" stroke="#5aa76b" stroke-width="0.9"/></svg>
<svg class="t" aria-label="新建批注(" role="img" style="left:304.90px;top:332.10px" width="35.85" height="10.40"><text x="0" y="7.60" font-size="8" fill="#3c3c3c">新建批注(</text></svg>
<svg class="t" aria-label="M" role="img" style="left:339.75px;top:332.10px" width="7.64" height="10.40"><text x="0" y="7.60" font-size="8" fill="#3c3c3c">M</text></svg>
<div class="b" style="left:339.948px;top:340.6px;width:6.24px;height:0.7px;background:#3c3c3c;"></div>
<svg class="t" aria-label=")" role="img" style="left:346.39px;top:332.10px" width="3.85" height="10.40"><text x="0" y="7.60" font-size="8" fill="#3c3c3c">)</text></svg>
<svg class="t" style="left:494px;top:392px;" width="54" height="54"><path d="M2.3 10L21.6 7.5V26H2.3Z" fill="#f3662c"/><path d="M25.3 7.1L51.5 2.1V25.7H25.3Z" fill="#8cc31f"/><path d="M2.3 29.5H21.6V47.2L2.3 44.9Z" fill="#12a4ea"/><path d="M25.3 29.5H51.5V52.4L25.3 47.2Z" fill="#ffc30d"/></svg>
<svg class="t" aria-label="电脑软硬件教程网" role="img" style="left:549.20px;top:399.65px" width="141.75" height="24.70"><text x="0" y="0" font-size="19" font-weight="bold" fill="#1e90dc" stroke="#1e90dc" stroke-width="0.25" transform="translate(0,18.05) scale(0.9258,1)">电脑软硬件教程网</text></svg>
<span class="l" style="left:559.2px;top:423.959px;font-size:12.2px;line-height:14.03px;color:#e1622f;font-weight:bold;letter-spacing:0px;">www.computer26.com</span>
</body></html>
